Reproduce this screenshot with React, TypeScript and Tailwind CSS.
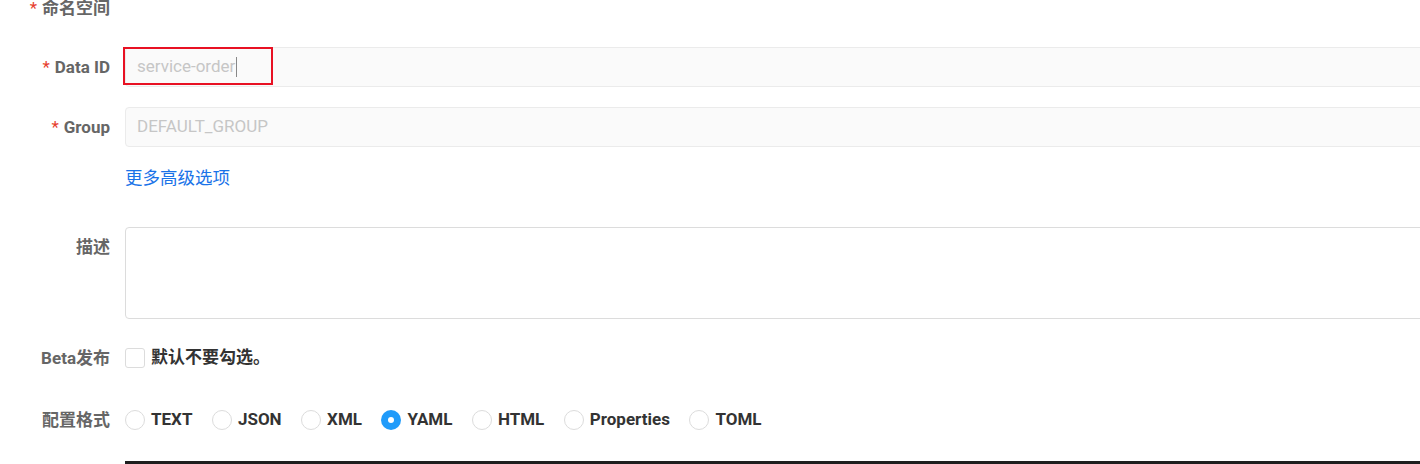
import React, { useState } from 'react';

const FONT = "font-['Roboto','Noto_Sans_CJK_SC',sans-serif]";

const formats = ['TEXT', 'JSON', 'XML', 'YAML', 'HTML', 'Properties', 'TOML'];

interface FieldLabelProps {
  text: string;
  required?: boolean;
}

const FieldLabel: React.FC<FieldLabelProps> = ({ text, required }) => (
  <div className="w-[110px] shrink-0 whitespace-nowrap text-right text-[17px] leading-[24px] font-bold text-[#666]">
    {required && <span className="mr-[5px] font-normal text-[#e63e2c]">*</span>}
    {text}
  </div>
);

const App: React.FC = () => {
  const [format, setFormat] = useState('YAML');
  const [beta, setBeta] = useState(false);

  return (
    <div className={`${FONT} h-[464px] w-[1420px] overflow-hidden bg-white`}>
      <div className="w-[1460px]">
        {/* Namespace row, cut off by the top edge */}
        <div className="-mt-[4px] flex h-[24px] items-center">
          <FieldLabel text="命名空间" required />
        </div>

        {/* Data ID */}
        <div className="mt-[27px] flex h-[40px] items-center gap-[15px]">
          <FieldLabel text="Data ID" required />
          <div className="relative h-[40px] flex-1 rounded-[4px] border border-[#ebebeb] bg-[#fafafa]">
            <div className="flex h-full items-center pl-[11px] text-[17px] text-[#c6c6c6]">
              service-order
              <span className="ml-[1px] inline-block h-[20px] w-[1px] bg-[#888]" />
            </div>
            <div className="absolute -left-[3px] -top-[1px] h-[38px] w-[150px] border-2 border-[#e81123]" />
          </div>
        </div>

        {/* Group */}
        <div className="mt-[20px] flex h-[40px] items-center gap-[15px]">
          <FieldLabel text="Group" required />
          <div className="flex h-[40px] flex-1 items-center rounded-[4px] border border-[#ebebeb] bg-[#fafafa] pl-[11px] text-[17px] text-[#c6c6c6]">
            DEFAULT_GROUP
          </div>
        </div>

        {/* Advanced options link */}
        <div className="mt-[19px] flex h-[24px] items-center gap-[15px]">
          <div className="w-[110px] shrink-0" />
          <a className="cursor-pointer text-[17.5px] leading-[24px] text-[#1a73e8]">更多高级选项</a>
        </div>

        {/* Description */}
        <div className="mt-[37px] flex gap-[15px]">
          <div className="pt-[8px]">
            <FieldLabel text="描述" />
          </div>
          <div className="h-[92px] flex-1 rounded-[4px] border border-[#dcdcdc] bg-white" />
        </div>

        {/* Beta */}
        <div className="mt-[27px] flex h-[24px] items-center gap-[15px]">
          <FieldLabel text="Beta发布" />
          <label className="flex cursor-pointer items-center gap-[6px]" onClick={() => setBeta(!beta)}>
            <span
              className={`inline-block h-[20px] w-[20px] rounded-[3px] border ${
                beta ? 'border-[#209bfa] bg-[#209bfa]' : 'border-[#dcdcdc] bg-white'
              }`}
            />
            <span className="text-[17px] font-bold text-[#333]">默认不要勾选。</span>
          </label>
        </div>

        {/* Format */}
        <div className="mt-[38px] flex h-[24px] items-center gap-[15px]">
          <FieldLabel text="配置格式" />
          <div className="flex items-center gap-[19.5px]">
            {formats.map((f) => (
              <label
                key={f}
                className="flex cursor-pointer items-center gap-[6px]"
                onClick={() => setFormat(f)}
              >
                {format === f ? (
                  <span className="flex h-[20px] w-[20px] items-center justify-center rounded-full bg-[#209bfa]">
                    <span className="h-[6px] w-[6px] rounded-full bg-white" />
                  </span>
                ) : (
                  <span className="h-[20px] w-[20px] rounded-full border border-[#dcdcdc] bg-white" />
                )}
                <span className="text-[17px] font-bold text-[#333]">{f}</span>
              </label>
            ))}
          </div>
        </div>

        {/* Editor top edge */}
        <div className="mt-[29px] flex gap-[15px]">
          <div className="w-[110px] shrink-0" />
          <div className="h-[10px] flex-1 bg-[#1e1e1e]" />
        </div>
      </div>
    </div>
  );
};

export default App;
